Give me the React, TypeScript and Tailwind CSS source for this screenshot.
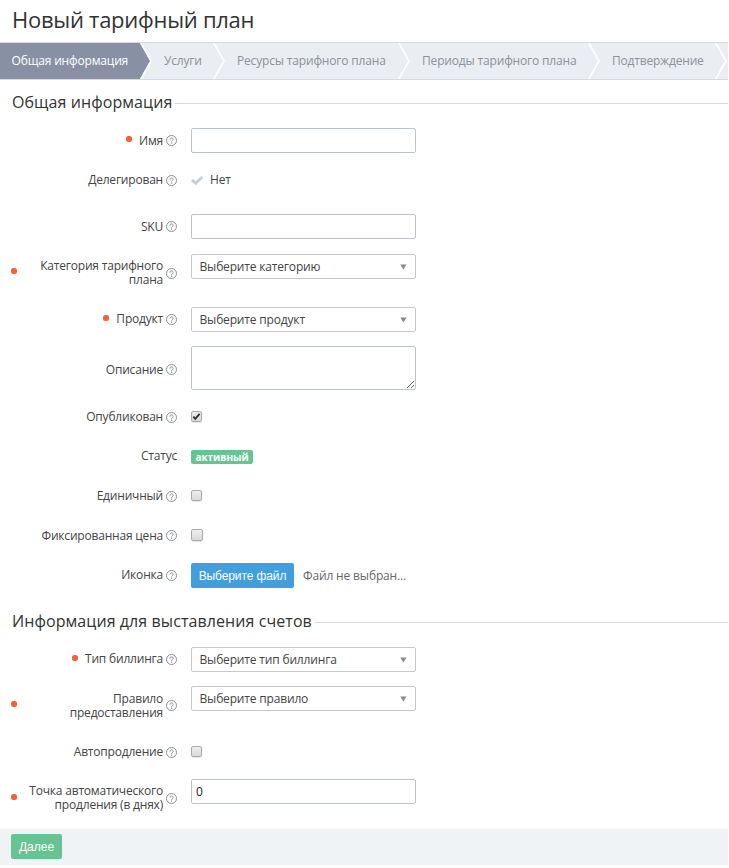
import type { ReactNode } from "react";

function HelpIcon({ className }: { className: string }) {
  return (
    <svg className={`ml-[3px] h-[12px] w-[12px] shrink-0 ${className}`} viewBox="0 0 12 12" fill="none">
      <circle cx="5.5" cy="5.5" r="5" stroke="#8b8f95" strokeWidth="1" />
      <path d="M3.9 4.6C3.9 3.4 4.6 2.9 5.5 2.9s1.7.6 1.7 1.5c0 1.1-1.6 1.1-1.6 2.3" stroke="#8b8f95" strokeWidth="1" />
      <path d="M5 7.6h1.1v1.1H5z" fill="#8b8f95" />
    </svg>
  );
}

type RowProps = {
  label: ReactNode;
  height: string;
  labelTop?: string;
  iconTop?: string;
  dotTop?: string;
  controlTop?: string;
  required?: boolean;
  wide?: boolean;
  help?: boolean;
  children: ReactNode;
};

function Row({
  label,
  height,
  labelTop = "mt-[13px]",
  iconTop = "mt-[14px]",
  dotTop = "mt-[15px]",
  controlTop = "mt-[7px]",
  required = false,
  wide = false,
  help = true,
  children,
}: RowProps) {
  return (
    <div className={`flex items-start ${height}`}>
      <div className={`flex w-[178px] shrink-0 items-start pl-[11px] ${wide ? "justify-between" : "justify-end"}`}>
        {required && (
          <span className={`h-[6px] w-[6px] shrink-0 rounded-[2.5px] bg-[#f75f35] ${wide ? "" : "mr-[7px]"} ${dotTop}`} />
        )}
        <div className="flex items-start">
          <span className={`text-right whitespace-nowrap ${labelTop} ${help ? "" : "mr-px"}`}>{label}</span>
          {help && <HelpIcon className={iconTop} />}
        </div>
      </div>
      <div className={`ml-[13px] ${controlTop}`}>{children}</div>
    </div>
  );
}

function TextInput({ value = "" }: { value?: string }) {
  return (
    <input
      className="block h-[25px] w-[225px] rounded-[2px] border border-[#bcc3cd] bg-white px-[4px] text-[12px] text-[#222] outline-none"
      defaultValue={value}
    />
  );
}

function Select({ children }: { children: string }) {
  return (
    <button className="flex h-[25px] w-[225px] items-center justify-between rounded-[2px] border border-[#c8c8c8] bg-white pr-[8px] pl-[7.5px] text-left tracking-[-0.17px]">
      <span>{children}</span>
      <svg className="mt-[1px] h-[6px] w-[7px]" viewBox="0 0 7 6">
        <path d="M0.3 0.5h6.2L3.4 5.6z" fill="#888" />
      </svg>
    </button>
  );
}

function Checkbox({ checked = false, size = "h-[11px] w-[11px]" }: { checked?: boolean; size?: string }) {
  return (
    <span
      className={`block rounded-[2px] border border-[#aaa] bg-linear-to-b from-[#eee] to-[#d9d9d9] shadow-[0_1px_1px_#e4e4e4] ${size}`}
    >
      {checked && (
        <svg className="h-[9px] w-[9px]" viewBox="0 0 9 9" fill="none">
          <path d="M1.3 4.6l2 2.2L7.6 1.8" stroke="#333" strokeWidth="2" />
        </svg>
      )}
    </span>
  );
}

function Heading({ children, className }: { children: string; className: string }) {
  return (
    <div className={`flex items-start pl-[12px] ${className}`}>
      <h2 className="text-[16px] leading-[22px] tracking-[0.08px] whitespace-nowrap text-[#333]">{children}</h2>
      <div className="mt-[12px] ml-[3px] h-px flex-1 bg-[#d5d9e1]" />
    </div>
  );
}

function Chevron({ active = false }: { active?: boolean }) {
  return (
    <svg className="h-[36px] w-[13px] shrink-0" viewBox="0 0 13 36" fill="none">
      {active && <path d="M0 0L10.5 18L0 36z" fill="#8891a3" />}
      <path d="M0.6 -0.5L11 18L0.6 36.5" stroke="#fff" strokeWidth="1.7" />
    </svg>
  );
}

function Step({ children, width }: { children: string; width: string }) {
  return (
    <>
      <div className={`shrink-0 pl-[11px] whitespace-nowrap ${width}`}>{children}</div>
      <Chevron />
    </>
  );
}

export default function App() {
  return (
    <div className="h-[868px] w-[728px] overflow-hidden bg-white font-['Open_Sans',sans-serif] text-[12px] leading-[14px] tracking-[-0.2px] text-[#444]">
      <h1 className="h-[42px] pt-[4px] pl-[12px] text-[22px] leading-[30px] tracking-[-0.27px] text-[#333]">
        Новый тарифный план
      </h1>

      <div className="flex h-[38px] items-center overflow-hidden border-y border-[#d5d9e1] bg-[#eaedf2] tracking-[-0.17px] text-[#8c929b]">
        <div className="flex h-[36px] w-[140px] shrink-0 items-center bg-[#8891a3] pl-[11.5px] whitespace-nowrap text-white">
          Общая информация
        </div>
        <Chevron active />
        <Step width="w-[60px]">Услуги</Step>
        <Step width="w-[172px]">Ресурсы тарифного плана</Step>
        <Step width="w-[177px]">Периоды тарифного плана</Step>
        <Step width="w-[114px]">Подтверждение</Step>
      </div>

      <Heading className="h-[41px] pt-[11px]">Общая информация</Heading>

      <Row label="Имя" height="h-[39px]" required>
        <TextInput />
      </Row>
      <Row label="Делегирован" height="h-[47px]" iconTop="mt-[15px]" controlTop="mt-[13px]">
        <div className="flex items-start">
          <svg className="mt-[2px] mr-[6px] h-[11px] w-[13px]" viewBox="0 0 13 11" fill="none">
            <path d="M1 4.9l3.7 3.3L11.3 2" stroke="#c8d0d9" strokeWidth="3" />
          </svg>
          <span>Нет</span>
        </div>
      </Row>
      <Row label="SKU" height="h-[40px]">
        <TextInput />
      </Row>
      <Row
        label={<>Категория тарифного<br />плана</>}
        height="h-[53px]"
        labelTop="mt-[12px]"
        iconTop="mt-[21px]"
        dotTop="mt-[21px]"
        required
        wide
      >
        <Select>Выберите категорию</Select>
      </Row>
      <Row label="Продукт" height="h-[39px]" labelTop="mt-[12px]" required>
        <Select>Выберите продукт</Select>
      </Row>
      <Row label="Описание" height="h-[58px]" labelTop="mt-[24px]" iconTop="mt-[25px]">
        <textarea className="block h-[44px] w-[225px] resize rounded-[2px] border border-[#bcc3cd] bg-white outline-none" />
      </Row>
      <Row label="Опубликован" height="h-[39px]" iconTop="mt-[15px]" controlTop="mt-[14px]">
        <Checkbox checked />
      </Row>
      <Row label="Статус" height="h-[40px]" controlTop="mt-[14px]" help={false}>
        <span className="flex h-[14px] w-[62px] items-center justify-center rounded-[2px] bg-[#67c492] text-[10px] font-bold tracking-[-0.05px] text-white">
          активный
        </span>
      </Row>
      <Row label="Единичный" height="h-[40px]" iconTop="mt-[15px]" controlTop="mt-[14px]">
        <Checkbox />
      </Row>
      <Row label="Фиксированная цена" height="h-[40px]" controlTop="mt-[13px]">
        <Checkbox size="h-[12px] w-[12px]" />
      </Row>
      <Row label="Иконка" height="h-[43px]" labelTop="mt-[12px]">
        <div className="flex items-center">
          <button className="h-[25px] w-[103px] rounded-[2px] bg-[#429edc] font-['Liberation_Sans',sans-serif] text-[12px] tracking-[-0.1px] whitespace-nowrap text-white">
            Выберите файл
          </button>
          <span className="ml-[9px] tracking-[-0.15px] text-[#666]">Файл не выбран...</span>
        </div>
      </Row>

      <Heading className="h-[41px] pt-[11px]">Информация для выставления счетов</Heading>

      <Row label="Тип биллинга" height="h-[39px]" labelTop="mt-[12px]" required>
        <Select>Выберите тип биллинга</Select>
      </Row>
      <Row
        label={<>Правило<br />предоставления</>}
        height="h-[53px]"
        iconTop="mt-[21px]"
        dotTop="mt-[22px]"
        required
        wide
      >
        <Select>Выберите правило</Select>
      </Row>
      <Row label="Автопродление" height="h-[40px]" iconTop="mt-[15px]" controlTop="mt-[14px]">
        <Checkbox />
      </Row>
      <Row
        label={<>Точка автоматического<br />продления (в днях)</>}
        height="h-[57px]"
        labelTop="mt-[12px]"
        iconTop="mt-[21px]"
        dotTop="mt-[22px]"
        required
        wide
      >
        <TextInput value="0" />
      </Row>

      <div className="flex h-[36px] items-start bg-[#eff3f6] pt-[5px] pl-[11px]">
        <button className="h-[25px] w-[51px] rounded-[2px] bg-[#67c492] font-['Liberation_Sans',sans-serif] text-[12px] tracking-normal text-white">
          Далее
        </button>
      </div>
    </div>
  );
}
